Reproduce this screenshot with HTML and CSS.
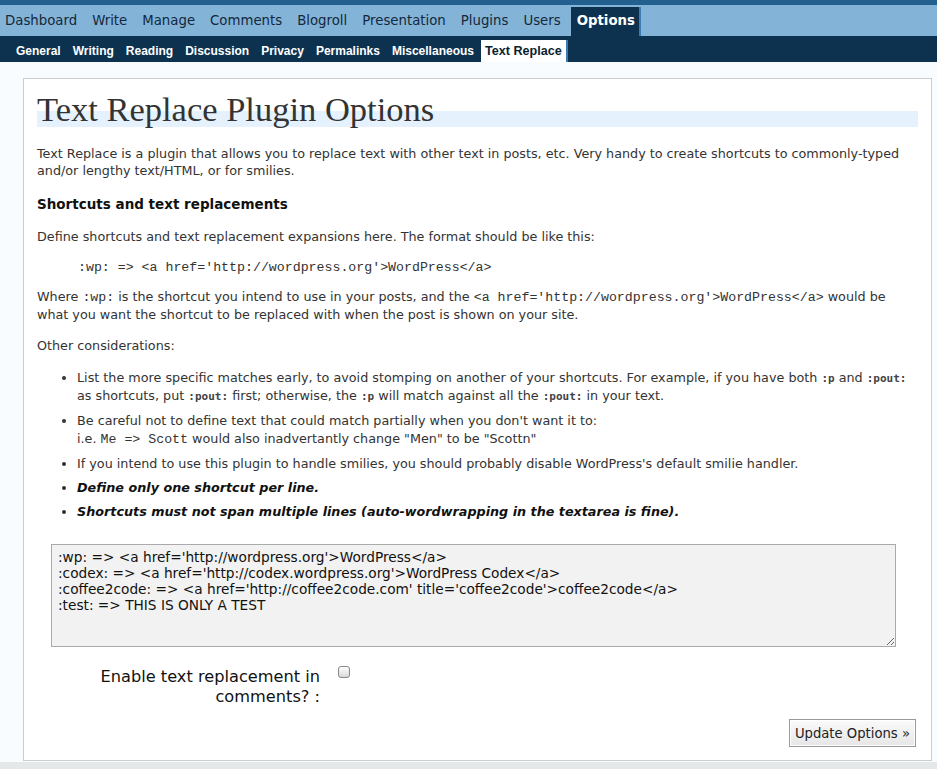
FILE: index.html
```html
<!DOCTYPE html>
<html lang="en">
<head>
    <meta charset="UTF-8">
    <title>Text Replace Plugin Options</title>
    <link rel="stylesheet" href="styles.css">
</head>
<body>
    <!-- Main admin menu -->
    <ul class="adminmenu">
        <li><a href="#">Dashboard</a></li>
        <li><a href="#">Write</a></li>
        <li><a href="#">Manage</a></li>
        <li><a href="#">Comments</a></li>
        <li><a href="#">Blogroll</a></li>
        <li><a href="#">Presentation</a></li>
        <li><a href="#">Plugins</a></li>
        <li><a href="#">Users</a></li>
        <li><a href="#" class="current">Options</a></li>
    </ul>

    <!-- Options sub menu -->
    <ul class="submenu">
        <li><a href="#">General</a></li>
        <li><a href="#">Writing</a></li>
        <li><a href="#">Reading</a></li>
        <li><a href="#">Discussion</a></li>
        <li><a href="#">Privacy</a></li>
        <li><a href="#">Permalinks</a></li>
        <li><a href="#">Miscellaneous</a></li>
        <li><a href="#" class="current">Text Replace</a></li>
    </ul>

    <div class="wrap">
        <h2>Text Replace Plugin Options</h2>
        <p>Text Replace is a plugin that allows you to replace text with other text in posts, etc. Very handy to create shortcuts to commonly-typed and/or lengthy text/HTML, or for smilies.</p>

        <h3>Shortcuts and text replacements</h3>
        <p>Define shortcuts and text replacement expansions here. The format should be like this:</p>
        <p class="example"><code>:wp: =&gt; &lt;a href='http://wordpress.org'&gt;WordPress&lt;/a&gt;</code></p>
        <p class="tall">Where <code>:wp:</code> is the shortcut you intend to use in your posts, and the <code>&lt;a href='http://wordpress.org'&gt;WordPress&lt;/a&gt;</code> would be what you want the shortcut to be replaced with when the post is shown on your site.</p>
        <p>Other considerations:</p>
        <ul class="notes">
            <li>List the more specific matches early, to avoid stomping on another of your shortcuts. For example, if you have both <code class="small">:p</code> and <code class="small">:pout:</code> as shortcuts, put <code class="small">:pout:</code> first; otherwise, the <code class="small">:p</code> will match against all the <code class="small">:pout:</code> in your text.</li>
            <li>Be careful not to define text that could match partially when you don't want it to:<br>i.e. <code>Me =&gt; Scott</code> would also inadvertantly change "Men" to be "Scottn"</li>
            <li>If you intend to use this plugin to handle smilies, you should probably disable WordPress's default smilie handler.</li>
            <li><em>Define only one shortcut per line.</em></li>
            <li><em>Shortcuts must not span multiple lines (auto-wordwrapping in the textarea is fine).</em></li>
        </ul>

        <form>
            <textarea name="text_to_replace">:wp: =&gt; &lt;a href='http://wordpress.org'&gt;WordPress&lt;/a&gt;
:codex: =&gt; &lt;a href='http://codex.wordpress.org'&gt;WordPress Codex&lt;/a&gt;
:coffee2code: =&gt; &lt;a href='http://coffee2code.com' title='coffee2code'&gt;coffee2code&lt;/a&gt;
:test: =&gt; THIS IS ONLY A TEST</textarea>

            <div class="option-row">
                <label for="text_replace_comments">Enable text replacement in comments? :</label>
                <input type="checkbox" id="text_replace_comments">
            </div>

            <div class="submit">
                <input type="submit" value="Update Options &raquo;">
            </div>
        </form>
    </div>

    <div class="footer"></div>
</body>
</html>
```

FILE: styles.css
```css
* {
    box-sizing: border-box;
}
body {
    margin: 0;
    background-color: #f9fcfe;
    font-family: "DejaVu Sans", sans-serif;
    color: #333;
}

/* admin menu */
.adminmenu {
    display: flex;
    align-items: flex-end;
    list-style: none;
    margin: 0;
    padding: 0;
    height: 36px;
    background-color: #83b4d8;
    border-top: 5px solid #23608f;
}
.adminmenu a {
    display: block;
    padding: 0 5px 1px;
    margin-right: 5px;
    line-height: 28px;
    font-size: 13.3px;
    color: #14283b;
    text-decoration: none;
}
.adminmenu a.current {
    background-color: #0d324f;
    color: #fff;
    font-weight: bold;
    padding-left: 6px;
    padding-right: 4px;
    border-right: 2px solid #3d7cb3;
}

.submenu {
    display: flex;
    align-items: flex-end;
    list-style: none;
    margin: 0;
    padding: 0 0 0 11px;
    height: 26px;
    background-color: #0d324f;
}
.submenu a {
    display: block;
    padding: 0 5px;
    margin-right: 2px;
    line-height: 22px;
    font-family: "Liberation Sans", sans-serif;
    font-size: 12px;
    font-weight: bold;
    color: #fff;
    text-decoration: none;
}
.submenu a.current {
    background-color: #fff;
    color: #0b1f30;
    font-size: 12.6px;
    padding-left: 4px;
    padding-right: 4px;
    border-right: 2px solid #3d7cb3;
}

/* content box */
.wrap {
    margin: 16px 5px 0 23px;
    background-color: #fff;
    border: 1px solid #ccc;
    padding: 12px 13px 13px;
}
.wrap h2 {
    margin: 0 0 18px;
    font-family: "Liberation Serif", serif;
    font-size: 34.5px;
    font-weight: normal;
    line-height: 36px;
    color: #333;
    background: linear-gradient(transparent 20px, #e5f1fc 20px);
}
.wrap h3 {
    margin: 16px 0 15px;
    font-size: 13.5px;
    line-height: 18px;
    color: #111;
}
.wrap p {
    margin: 13px 0;
    font-size: 12.75px;
    line-height: 17px;
}
.wrap p.tall {
    line-height: 18px;
}
.wrap p.example {
    padding-left: 41px;
}
code {
    font-family: "Liberation Mono", monospace;
    font-size: 13.25px;
    line-height: 1;
}
code.small {
    font-family: "DejaVu Sans Mono", monospace;
    font-size: 11px;
    font-weight: bold;
    color: #444;
}

.notes {
    margin: 15px 0 0;
    padding-left: 40px;
    font-size: 12.75px;
    line-height: 18px;
}
.notes li {
    margin-bottom: 6px;
}
.notes li:nth-child(-n+2) {
    margin-bottom: 7px;
}
.notes em {
    font-weight: bold;
    color: #111;
}

/* options form */
textarea {
    display: block;
    width: 845px;
    height: 103px;
    margin: 23px 0 0 14px;
    padding: 4px 6px;
    font-family: "DejaVu Sans", sans-serif;
    font-size: 13.7px;
    line-height: 16px;
    color: #111;
    background-color: #f2f2f2;
    border: 1px solid #aaa;
}
.option-row {
    display: flex;
    align-items: flex-start;
    margin-top: 20px;
}
.option-row label {
    width: 283px;
    text-align: right;
    font-size: 16.2px;
    line-height: 20px;
    color: #111;
}
.option-row input {
    appearance: none;
    width: 12px;
    height: 12px;
    margin: -1px 0 0 18px;
    border: 1px solid #888;
    border-radius: 3px;
    background: linear-gradient(#fff, #d8d8d8);
}
.submit {
    display: flex;
    justify-content: flex-end;
    margin-top: 12px;
    padding-right: 2px;
}
.submit input {
    height: 28px;
    padding: 0 5px;
    font-family: "DejaVu Sans", sans-serif;
    font-size: 13.2px;
    color: #222;
    background: linear-gradient(#fafafa, #e6e6e6);
    border: 1px solid #999;
    box-shadow: inset 0 0 0 1px #fff;
}

.footer {
    margin-top: 1px;
    height: 10px;
    background-color: #e4e8e8;
}
```
